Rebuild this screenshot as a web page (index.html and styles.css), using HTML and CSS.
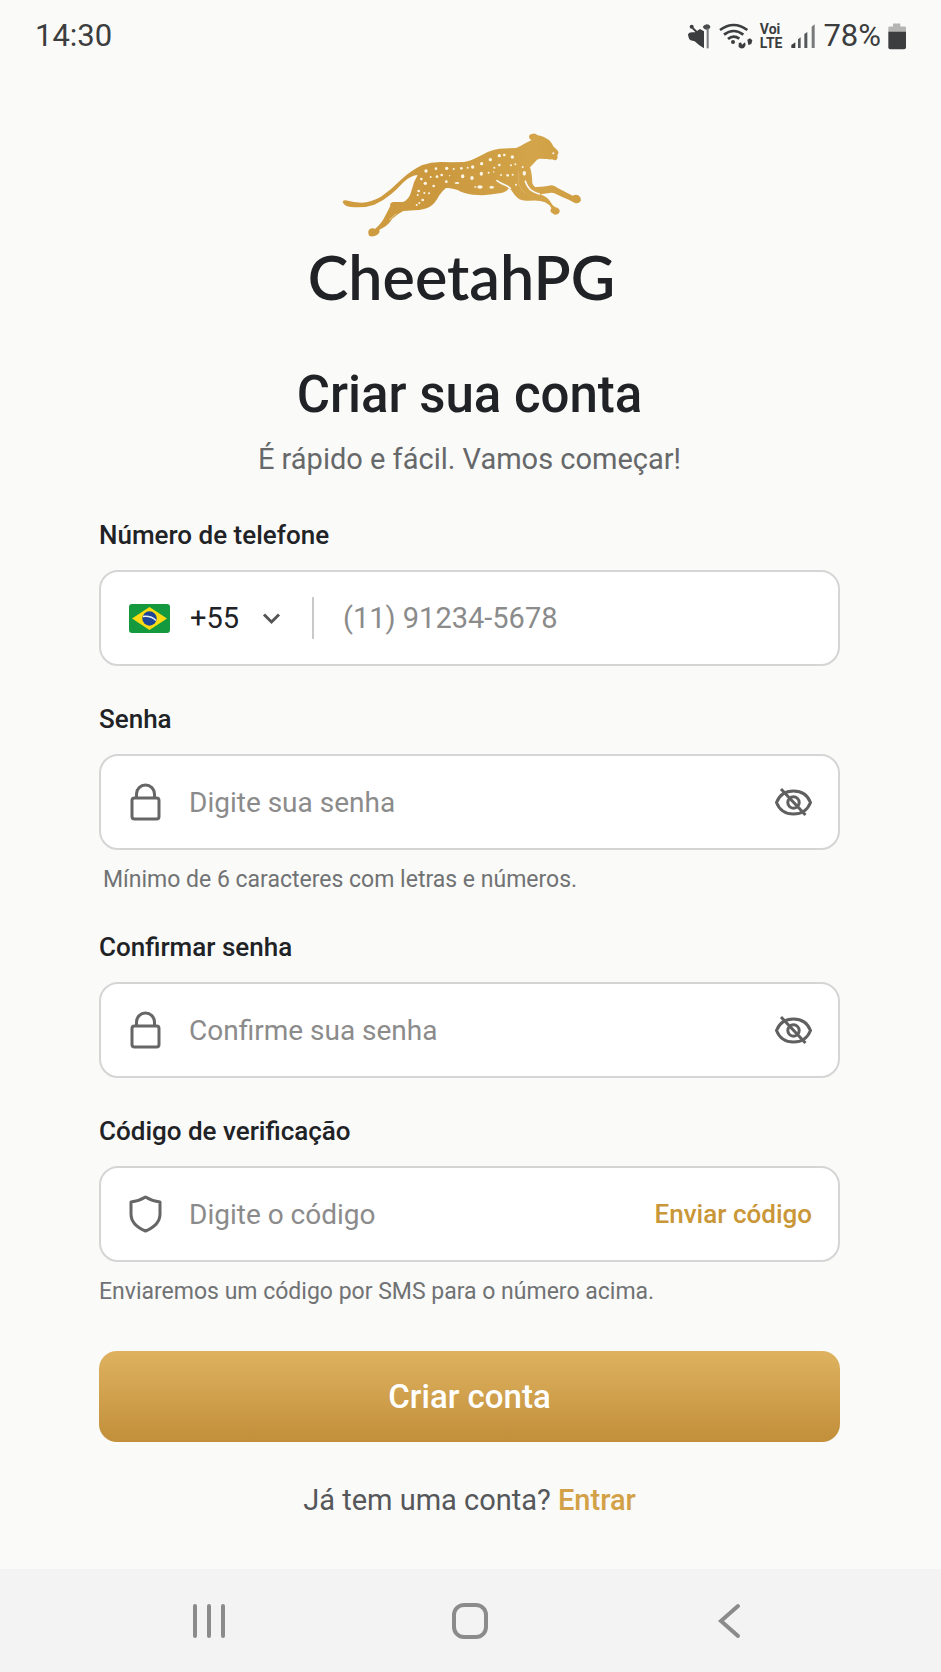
FILE: index.html
```html
<!DOCTYPE html>
<html lang="pt-BR">
<head>
  <meta charset="UTF-8" />
  <meta name="viewport" content="width=device-width, initial-scale=1.0" />
  <title>CheetahPG - Criar sua conta</title>
  <link rel="stylesheet" href="styles.css">
</head>
<body>
  <header class="status-bar">
    <span class="status-text">14:30</span>
    <div class="status-icons">
      <svg class="icon-mute" viewBox="45 34 75 78" aria-hidden="true">
        <path d="M48 68q2-6 12-6h9l15-10 12 7v51l-14-9-14-12-12-3q-7-4-8-18z" fill="#3b3d3e"/>
        <circle cx="59" cy="45" r="6" fill="#3b3d3e"/>
        <path d="M62 49l22 22" stroke="#3b3d3e" stroke-width="6"/>
        <path d="M92 46q3-6 12-8 11 1 11 9-2 7-10 7-8 1-13-8z" fill="#4a4c4d"/>
        <path d="M107 50v60" stroke="#77797a" stroke-width="6"/>
      </svg>
      <svg class="icon-wifi" viewBox="145 34 102 78" aria-hidden="true">
        <g fill="none" stroke="#3b3d3e" stroke-width="8">
          <path d="M148 55q41-30 82 0"/>
          <path d="M160 69q29-22 58 0"/>
          <path d="M172 82q16-14 34-1"/>
        </g>
        <circle cx="187" cy="91" r="6" fill="#3b3d3e"/>
        <path d="M204 95l7-3 3 7 9-7 2 8-5 9q-10 4-16-3zM230 84l8-4 7 6-3 11-9 3z" fill="#3b3d3e"/>
      </svg>
      <span class="volte"><span>Voi</span><span>LTE</span></span>
      <svg class="icon-signal" viewBox="360 34 75 78" aria-hidden="true">
        <path d="M361 109v-9l12-8v17z" fill="#3b3d3e"/>
        <path d="M381 109V83l8-6v32z" fill="#55585a"/>
        <path d="M400 109V67l9-6v48z" fill="#55585a"/>
        <path d="M422 109V45l9-7v71z" fill="#77797a"/>
      </svg>
      <span class="status-text">78%</span>
      <svg class="icon-battery" viewBox="654 36 54 80" aria-hidden="true">
        <path d="M669 37h22v9h13q4 0 4 4v14h-53V50q0-4 4-4h10z" fill="#b5b5b4"/>
        <path d="M655 62h53v46q0 6-6 6h-41q-6 0-6-6z" fill="#3b3d3e"/>
      </svg>
    </div>
  </header>

  <main class="page">
    <div class="brand">
      <svg class="brand-logo" viewBox="33 22 720 321" aria-hidden="true">
        <defs>
          <linearGradient id="gold" x1="0" y1="0" x2="1" y2="0">
            <stop offset="0" stop-color="#cf9c40"/>
            <stop offset="0.4" stop-color="#cb983e"/>
            <stop offset="0.8" stop-color="#d3a449"/>
            <stop offset="1" stop-color="#d09e43"/>
          </linearGradient>
        </defs>
        <path fill="url(#gold)" d="M35 232Q36 226 44 227Q68 234 92 234Q120 233 150 216Q180 195 210 165Q240 138 272 122Q300 112 330 112Q365 113 400 112Q420 108 430 102Q450 93 470 82Q488 74 505 72L555 70Q568 65 580 57L602 46Q594 43 594 36Q595 28 603 28Q612 23 620 32Q632 33 640 38Q655 45 661 54L668 66Q680 75 683 84L679 92L680 99Q677 107 671 107L663 104Q655 105 648 103L625 102Q618 103 612 112L597 128Q603 145 604 175Q606 183 612 187Q635 188 662 182Q670 183 680 190L725 213Q734 208 742 212Q752 219 749 229Q743 238 732 235Q722 231 715 226Q690 216 675 208Q665 203 655 205L628 209Q650 218 657 230Q663 242 673 248Q687 251 686 261Q683 270 672 270Q659 264 658 258L661 250Q655 239 642 233Q625 225 595 228Q572 230 560 220Q550 211 540 195L532 192Q525 203 505 206Q470 213 440 211Q410 209 390 201Q370 190 345 190Q332 200 325 212Q312 238 295 247Q280 256 250 257L217 259Q200 267 183 283Q172 302 155 310L145 315Q148 325 138 331Q126 338 115 334Q109 323 114 315Q122 308 133 312Q152 296 162 275Q172 256 178 243Q175 234 186 232L215 232Q235 226 242 196Q248 170 260 151Q240 152 218 172Q197 195 180 209Q158 228 130 240Q100 251 60 247Q40 245 35 232Z"/>
        <g fill="none" stroke="#fafaf8" stroke-linecap="round">
          <path d="M498 168q10 8 24 13q10 4 16 11" stroke-width="5"/>
          <path d="M583 170q7 20 19 28t23 10" stroke-width="5"/>
          <path d="M563 142v36q8 20 20 28" stroke="#dfba73" stroke-width="2"/>
          <path d="M175 285l20-17" stroke="#e6c88d" stroke-width="3"/>
        </g>
        <circle cx="667" cy="86" r="3" fill="#fafaf8"/>
        <g fill="#fbf5e6">
          <circle cx="285" cy="139" r="5"/><circle cx="315" cy="132" r="4"/><circle cx="347" cy="131" r="5"/>
          <circle cx="368" cy="133" r="3"/><circle cx="391" cy="131" r="4"/><circle cx="410" cy="129" r="3"/>
          <circle cx="425" cy="127" r="5"/><circle cx="452" cy="117" r="5"/><circle cx="478" cy="105" r="5"/>
          <circle cx="505" cy="93" r="5"/><circle cx="520" cy="91" r="4"/><circle cx="544" cy="97" r="5"/>
          <circle cx="505" cy="121" r="4"/><circle cx="490" cy="129" r="3"/><circle cx="540" cy="122" r="3"/>
          <circle cx="553" cy="119" r="3"/><circle cx="575" cy="127" r="3"/>
          <circle cx="271" cy="163" r="4"/><circle cx="283" cy="176" r="5"/><circle cx="299" cy="157" r="3"/>
          <circle cx="308" cy="184" r="4"/><circle cx="318" cy="156" r="4"/><circle cx="332" cy="151" r="4"/>
          <circle cx="346" cy="171" r="4"/><circle cx="356" cy="153" r="2"/><circle cx="263" cy="199" r="4"/>
          <circle cx="280" cy="205" r="3"/><circle cx="294" cy="206" r="3"/><circle cx="260" cy="211" r="3"/>
          <circle cx="275" cy="226" r="4"/><circle cx="265" cy="235" r="3"/><circle cx="257" cy="241" r="3"/>
          <circle cx="473" cy="144" r="3"/><circle cx="488" cy="142" r="2"/><circle cx="510" cy="151" r="3"/>
          <circle cx="530" cy="152" r="4"/><circle cx="545" cy="150" r="3"/><circle cx="555" cy="180" r="3"/>
          <ellipse cx="378" cy="175" rx="7" ry="3"/><ellipse cx="395" cy="155" rx="5" ry="6"/>
          <ellipse cx="423" cy="160" rx="5" ry="6"/><ellipse cx="451" cy="147" rx="5" ry="6"/>
          <ellipse cx="447" cy="187" rx="8" ry="5"/><ellipse cx="482" cy="188" rx="7" ry="4"/>
          <ellipse cx="580" cy="146" rx="5" ry="7"/><ellipse cx="433" cy="187" rx="4" ry="2"/>
        </g>
      </svg>
      <div class="brand-name">CheetahPG</div>
    </div>

    <h1>Criar sua conta</h1>
    <p class="subtitle">É rápido e fácil. Vamos começar!</p>

    <form class="signup-form" onsubmit="event.preventDefault();">
      <div class="form-group">
        <label for="phone">Número de telefone</label>
        <div class="field">
          <div class="country">
            <svg class="flag" viewBox="0 0 44 32" aria-hidden="true">
              <rect x="2" y="2" width="41" height="29" rx="3" fill="#15993f"/>
              <path d="M22.500 5L40 16.500L22.500 28L5 16.500z" fill="#fbdc12"/>
              <circle cx="22.500" cy="16.500" r="7.200" fill="#1c4598"/>
              <path d="M16 14.500q8-1 13 4" fill="none" stroke="#e9f0f5" stroke-width="1.500"/>
            </svg>
            <select id="countryCode" aria-label="Código do país">
              <option value="55">+55</option>
            </select>
            <svg class="chevron" viewBox="0 0 24 24" aria-hidden="true">
              <path d="M5 8.500l7.500 7.500L20 8.500"/>
            </svg>
          </div>
          <input type="tel" id="phone" placeholder="(11) 91234-5678" />
        </div>
      </div>

      <div class="form-group">
        <label for="password">Senha</label>
        <div class="field">
          <svg class="field-icon" viewBox="0 0 36 40" aria-hidden="true">
            <rect x="5" y="16" width="27" height="21" rx="2.500"/>
            <path d="M9.500 16v-4a9 9 0 0 1 18 0v4"/>
          </svg>
          <input type="password" id="password" placeholder="Digite sua senha" />
          <button type="button" class="toggle" aria-label="Mostrar senha" onclick="togglePassword('password')">
            <svg viewBox="0 0 38 32" aria-hidden="true">
              <path d="M2.500 16.500Q7 5 19.500 5T36.500 16.500Q32 28 19.500 28T2.500 16.500z"/>
              <circle cx="19.500" cy="16.500" r="5.700"/>
              <path d="M7 3l24.500 26"/>
            </svg>
          </button>
        </div>
        <p class="hint hint-inset">Mínimo de 6 caracteres com letras e números.</p>
      </div>

      <div class="form-group">
        <label for="confirm">Confirmar senha</label>
        <div class="field">
          <svg class="field-icon" viewBox="0 0 36 40" aria-hidden="true">
            <rect x="5" y="16" width="27" height="21" rx="2.500"/>
            <path d="M9.500 16v-4a9 9 0 0 1 18 0v4"/>
          </svg>
          <input type="password" id="confirm" placeholder="Confirme sua senha" />
          <button type="button" class="toggle" aria-label="Mostrar senha" onclick="togglePassword('confirm')">
            <svg viewBox="0 0 38 32" aria-hidden="true">
              <path d="M2.500 16.500Q7 5 19.500 5T36.500 16.500Q32 28 19.500 28T2.500 16.500z"/>
              <circle cx="19.500" cy="16.500" r="5.700"/>
              <path d="M7 3l24.500 26"/>
            </svg>
          </button>
        </div>
      </div>

      <div class="form-group">
        <label for="code">Código de verificação</label>
        <div class="field">
          <svg class="field-icon" viewBox="0 0 36 40" aria-hidden="true">
            <path d="M18.500 3Q25 7 33 8v12q0 11-14.500 17Q4 31 4 20V8q8-1 14.500-5z"/>
          </svg>
          <input type="text" id="code" placeholder="Digite o código" />
          <button type="button" class="send-code">Enviar código</button>
        </div>
        <p class="hint">Enviaremos um código por SMS para o número acima.</p>
      </div>

      <button type="submit" class="submit">Criar conta</button>
    </form>

    <p class="login-link">Já tem uma conta? <a href="#">Entrar</a></p>
  </main>

  <nav class="nav-bar">
    <button type="button" aria-label="Recentes">
      <svg viewBox="0 0 40 40"><path d="M6 5v30M20 5v30M34 5v30"/></svg>
    </button>
    <button type="button" aria-label="Início">
      <svg viewBox="0 0 40 40"><rect x="4" y="4" width="32" height="32" rx="10"/></svg>
    </button>
    <button type="button" aria-label="Voltar">
      <svg viewBox="0 0 40 40"><path d="M28 5L11 20l17 15"/></svg>
    </button>
  </nav>

  <script>
    function togglePassword(id) {
      const input = document.getElementById(id);
      input.type = input.type === 'password' ? 'text' : 'password';
    }
  </script>
</body>
</html>
```

FILE: styles.css
```css
* {
  box-sizing: border-box;
  font-family: Roboto, 'Liberation Sans', sans-serif;
}
body {
  margin: 0;
  min-height: 100vh;
  display: flex;
  flex-direction: column;
  background: #fafaf8;
  color: #202226;
}
button {
  padding: 0;
  border: none;
  background: none;
  cursor: pointer;
}

/* status bar */
.status-bar {
  display: flex;
  justify-content: space-between;
  align-items: center;
  height: 72px;
  padding: 0 35px;
}
.status-text {
  font-size: 31px;
  line-height: 36px;
  color: #3b3d3e;
}
.status-icons {
  display: flex;
  align-items: center;
  gap: 7px;
}
.icon-mute,
.icon-signal {
  width: 25px;
  height: 26px;
}
.icon-signal {
  margin-left: 2px;
}
.icon-wifi {
  width: 34px;
  height: 26px;
}
.icon-battery {
  width: 18px;
  height: 27px;
}
.volte {
  display: flex;
  flex-direction: column;
  font-size: 14px;
  font-weight: 700;
  line-height: 14px;
  color: #3b3d3e;
}

/* content */
.page {
  flex: 1;
  padding: 60px 101px 48px 99px;
}
.brand {
  display: flex;
  flex-direction: column;
  align-items: center;
  gap: 6px;
  padding-right: 16px;
}
.brand-logo {
  width: 240px;
  height: 107px;
}
.brand-name {
  font-family: Lato, sans-serif;
  font-size: 61px;
  font-weight: 600;
  line-height: 64px;
}
h1 {
  margin: 56px 0 16px;
  font-size: 51px;
  font-weight: 500;
  line-height: 60px;
  text-align: center;
}
.subtitle {
  margin: 0 0 42px;
  font-size: 29px;
  line-height: 36px;
  text-align: center;
  color: #66686a;
}

/* form */
.form-group {
  margin-bottom: 37px;
}
.form-group label {
  display: block;
  margin-bottom: 19px;
  font-size: 26px;
  font-weight: 500;
  line-height: 32px;
}
.field {
  display: flex;
  align-items: center;
  height: 96px;
  padding: 0 26px;
  background: #fff;
  border: 2px solid #d5d5d5;
  border-radius: 19px;
}
.field-icon {
  width: 36px;
  height: 40px;
  margin-right: 26px;
  fill: none;
  stroke: #666;
  stroke-width: 3;
  stroke-linejoin: round;
}
.field input {
  flex: 1;
  min-width: 0;
  padding: 0;
  border: none;
  outline: none;
  background: none;
  font-size: 28px;
  color: #202226;
}
.field input[type="tel"] {
  font-size: 29px;
}
.field input::placeholder {
  color: #8b8b8b;
  opacity: 1;
}
.country {
  display: flex;
  align-items: center;
  gap: 19px;
  height: 42px;
  margin-right: 29px;
  padding-right: 29px;
  border-right: 2px solid #c9c9c9;
}
.country select {
  appearance: none;
  padding: 0;
  border: none;
  background: none;
  font-size: 29px;
  color: #202226;
}
.flag {
  width: 44px;
  height: 32px;
}
.chevron {
  width: 24px;
  height: 24px;
  fill: none;
  stroke: #555;
  stroke-width: 3;
}
.toggle {
  display: flex;
}
.toggle svg {
  width: 38px;
  height: 32px;
  fill: none;
  stroke: #606060;
  stroke-width: 3;
}
.send-code {
  font-size: 26px;
  font-weight: 500;
  color: #c99638;
}
.hint {
  margin: 16px 0 0;
  font-size: 23px;
  line-height: 28px;
  color: #707274;
}
.hint-inset {
  padding-left: 4px;
}
.submit {
  width: 100%;
  height: 91px;
  margin-top: 8px;
  border-radius: 18px;
  background: linear-gradient(#deb260, #c28f3a);
  font-size: 33px;
  font-weight: 500;
  color: #fff;
}
.login-link {
  margin: 40px 0 0;
  font-size: 29px;
  line-height: 36px;
  text-align: center;
  color: #55575a;
}
.login-link a {
  font-weight: 500;
  color: #d2a147;
  text-decoration: none;
}

/* navigation bar */
.nav-bar {
  display: flex;
  justify-content: space-between;
  align-items: center;
  height: 103px;
  padding: 0 191px 0 189px;
  background: #f3f3f3;
}
.nav-bar button {
  display: flex;
}
.nav-bar svg {
  width: 40px;
  height: 40px;
  fill: none;
  stroke: #8b8b8b;
  stroke-width: 4;
  stroke-linecap: round;
}
```
